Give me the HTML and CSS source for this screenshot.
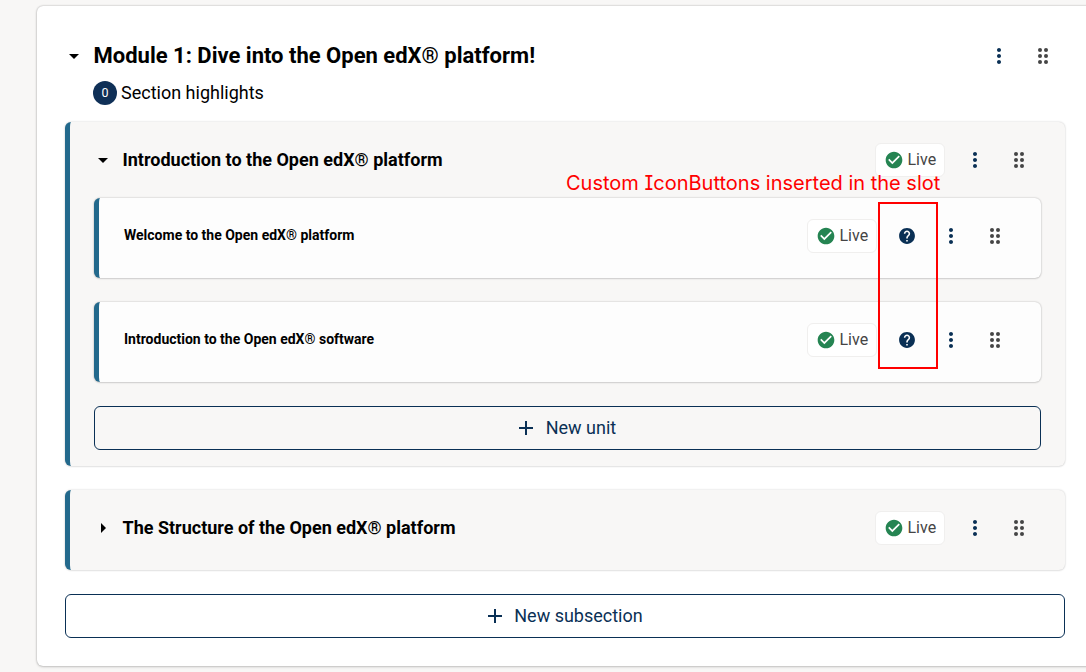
FILE: index.html
```
<!DOCTYPE html>
<html lang="en">
<head>
<meta charset="utf-8">
<title>Course outline</title>
<link rel="stylesheet" href="styles.css">
</head>
<body>
<svg class="defs" width="0" height="0">
  <symbol id="down" viewBox="0 0 24 24"><path d="m7 10 5 5 5-5z"/></symbol>
  <symbol id="right" viewBox="0 0 24 24"><path d="m10 17 5-5-5-5z"/></symbol>
  <symbol id="more" viewBox="0 0 24 24"><path d="M12 8c1.100 0 2-.9 2-2s-.9-2-2-2-2 .9-2 2 .9 2 2 2m0 2c-1.100 0-2 .9-2 2s.9 2 2 2 2-.9 2-2-.9-2-2-2m0 6c-1.100 0-2 .9-2 2s.9 2 2 2 2-.9 2-2-.9-2-2-2"/></symbol>
  <symbol id="drag" viewBox="0 0 24 24"><circle cx="9" cy="6" r="2"/><circle cx="9" cy="12" r="2"/><circle cx="9" cy="18" r="2"/><circle cx="15" cy="6" r="2"/><circle cx="15" cy="12" r="2"/><circle cx="15" cy="18" r="2"/></symbol>
  <symbol id="check" viewBox="0 0 24 24"><path d="M12 2C6.480 2 2 6.480 2 12s4.480 10 10 10 10-4.480 10-10S17.520 2 12 2m-2 15-5-5 1.410-1.410L10 14.170l7.590-7.590L19 8z"/></symbol>
  <symbol id="help" viewBox="0 0 24 24"><path d="M12 2C6.480 2 2 6.480 2 12s4.480 10 10 10 10-4.480 10-10S17.520 2 12 2m1 17h-2v-2h2zm2.070-7.750-.9.920C13.450 12.900 13 13.500 13 15h-2v-.5c0-1.100.45-2.100 1.170-2.830l1.240-1.260c.37-.36.590-.86.590-1.410 0-1.100-.9-2-2-2s-2 .9-2 2H8c0-2.210 1.790-4 4-4s4 1.790 4 4c0 .88-.36 1.680-.93 2.250"/></symbol>
  <symbol id="plus" viewBox="0 0 24 24"><path d="M19 13h-6v6h-2v-6H5v-2h6V5h2v6h6z"/></symbol>
</svg>
<main class="section">
  <header class="row section-head">
    <svg class="caret"><use href="#down"/></svg>
    <h1 class="section-title">Module 1: Dive into the Open edX® platform!</h1>
    <span class="icon-button"><svg><use href="#more"/></svg></span>
    <span class="icon-button drag"><svg><use href="#drag"/></svg></span>
  </header>
  <div class="highlights"><span class="count">0</span><span class="highlights-label">Section highlights</span></div>

  <section class="subsection">
    <header class="row subsection-head">
      <svg class="caret"><use href="#down"/></svg>
      <h2 class="subsection-title">Introduction to the Open edX® platform</h2>
      <span class="chip"><svg><use href="#check"/></svg><span class="label">Live</span></span>
      <span class="icon-button"><svg><use href="#more"/></svg></span>
      <span class="icon-button drag"><svg><use href="#drag"/></svg></span>
    </header>
    <div class="units">
      <article class="row unit">
        <h3 class="unit-title">Welcome to the Open edX® platform</h3>
        <span class="chip"><svg><use href="#check"/></svg><span class="label">Live</span></span>
        <span class="icon-button help"><svg><use href="#help"/></svg></span>
        <span class="icon-button"><svg><use href="#more"/></svg></span>
        <span class="icon-button drag"><svg><use href="#drag"/></svg></span>
      </article>
      <article class="row unit">
        <h3 class="unit-title">Introduction to the Open edX® software</h3>
        <span class="chip"><svg><use href="#check"/></svg><span class="label">Live</span></span>
        <span class="icon-button help"><svg><use href="#help"/></svg></span>
        <span class="icon-button"><svg><use href="#more"/></svg></span>
        <span class="icon-button drag"><svg><use href="#drag"/></svg></span>
      </article>
    </div>
    <div class="add-button"><svg><use href="#plus"/></svg><span class="label">New unit</span></div>
  </section>

  <section class="subsection collapsed">
    <header class="row subsection-head">
      <svg class="caret"><use href="#right"/></svg>
      <h2 class="subsection-title">The Structure of the Open edX® platform</h2>
      <span class="chip"><svg><use href="#check"/></svg><span class="label">Live</span></span>
      <span class="icon-button"><svg><use href="#more"/></svg></span>
      <span class="icon-button drag"><svg><use href="#drag"/></svg></span>
    </header>
  </section>
  <div class="add-button"><svg><use href="#plus"/></svg><span class="label">New subsection</span></div>
</main>
<div class="note">Custom IconButtons inserted in the slot</div>
<div class="note-frame"></div>
</body>
</html>
```
FILE: styles.css
```
* { box-sizing: border-box; }
body {
  margin: 0;
  padding: 6px 0 0 37px;
  height: 672px;
  overflow: hidden;
  position: relative;
  background: #f8f7f6;
  color: #000;
  font-family: Roboto, sans-serif;
}
.defs { position: absolute; }
h1, h2, h3 { margin: 0; font-weight: 700; white-space: nowrap; }
svg { width: 24px; height: 24px; fill: currentColor; flex: none; }
.section {
  width: 1057px;
  height: 660px;
  padding: 28px 29px 0 28px;
  background: #fff;
  border-radius: 6px;
  box-shadow: 0 0 2px rgba(0,0,0,.3), 0 1px 3px rgba(0,0,0,.15);
}
.row { display: flex; align-items: center; }
.section-head { height: 44px; }
.caret { width: 24px; height: 24px; margin: 0 7.500px 0 -3px; }
.section-title { flex: 1; font-size: 22px; line-height: 28px; }
.icon-button {
  width: 44px;
  height: 44px;
  display: grid;
  place-items: center;
  color: #0a3055;
}
.icon-button svg { width: 24px; height: 24px; }
.icon-button.help svg { padding: 2.500px; }
.icon-button.drag { color: #454545; }
.highlights {
  display: flex;
  align-items: center;
  gap: 4px;
  height: 28px;
  margin: 1px 0 15px 28px;
  font-size: 18px;
}
.highlights-label { padding-bottom: 2px; }
.count {
  width: 24px;
  height: 24px;
  padding-bottom: 1px;
  border-radius: 50%;
  background: #0f3057;
  color: #fff;
  display: grid;
  place-items: center;
  font-size: 12.500px;
}
.subsection {
  width: 1000px;
  height: 344px;
  padding: 16px 24px 0 24px;
  border-left: 5px solid #23698c;
  border-radius: 6px;
  background: #f8f7f6;
  box-shadow: 0 0 2px rgba(0,0,0,.22), 0 1px 2px rgba(0,0,0,.06);
}
.subsection-head { height: 44px; }
.subsection-title { flex: 1; font-size: 18px; line-height: 28px; }
.chip {
  display: flex;
  align-items: center;
  gap: 3.500px;
  width: 70px;
  height: 34px;
  margin-right: 8px;
  padding-left: 8px;
  border: 1px solid #f0efee;
  border-radius: 6px;
  background: #fff;
  color: #454545;
  font-size: 16px;
}
.chip svg { width: 20px; height: 20px; color: #258452; }
.label { padding-bottom: 2px; }
.units { display: flex; flex-direction: column; gap: 24px; margin: 16px 0 24px; }
.unit {
  width: 947px;
  height: 80px;
  padding: 0 24px 4px 25px;
  border-left: 5px solid #23698c;
  border-radius: 6px;
  background: #fdfdfd;
  box-shadow: 0 0 2px rgba(0,0,0,.28), 0 1px 2px rgba(0,0,0,.1);
}
.unit-title { flex: 1; padding-bottom: 2px; font-size: 14px; line-height: 24px; }
.add-button {
  display: flex;
  align-items: center;
  justify-content: center;
  gap: 7.500px;
  height: 44px;
  padding-right: 4.500px;
  border: 1px solid #0a3055;
  border-radius: 6px;
  color: #0a3055;
  font-size: 18px;
}
.collapsed { height: 80px; margin: 24px 0; }
.note {
  position: absolute;
  left: 566px;
  top: 170px;
  color: #f00;
  font: 20px/26px Inter, sans-serif;
  font-feature-settings: "cv08";
  white-space: nowrap;
}
.note-frame {
  position: absolute;
  left: 878px;
  top: 202px;
  width: 60px;
  height: 167px;
  border: 2px solid #f00;
}
```
